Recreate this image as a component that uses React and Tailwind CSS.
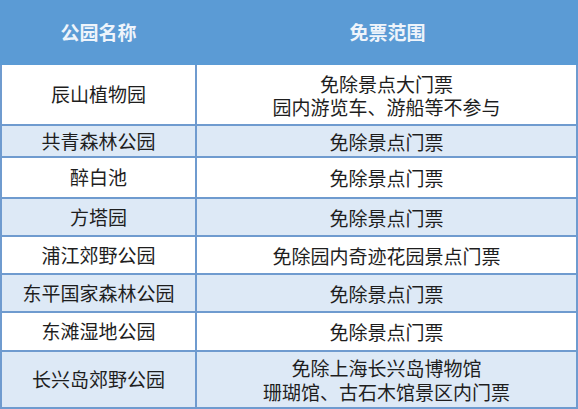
import React from 'react';

const rows = [
  { name: '辰山植物园', scope: ['免除景点大门票', '园内游览车、游船等不参与'], h: 'h-[61px]', bg: 'bg-white', lh: 'leading-[23px]' },
  { name: '共青森林公园', scope: ['免除景点门票'], h: 'h-[32px]', bg: 'bg-[#dde9f6]', lh: 'leading-[23px]' },
  { name: '醉白池', scope: ['免除景点门票'], h: 'h-[41px]', bg: 'bg-white', lh: 'leading-[23px]' },
  { name: '方塔园', scope: ['免除景点门票'], h: 'h-[38px]', bg: 'bg-[#dde9f6]', lh: 'leading-[23px]' },
  { name: '浦江郊野公园', scope: ['免除园内奇迹花园景点门票'], h: 'h-[38px]', bg: 'bg-white', lh: 'leading-[23px]' },
  { name: '东平国家森林公园', scope: ['免除景点门票'], h: 'h-[38px]', bg: 'bg-[#dde9f6]', lh: 'leading-[23px]' },
  { name: '东滩湿地公园', scope: ['免除景点门票'], h: 'h-[39px]', bg: 'bg-white', lh: 'leading-[23px]' },
  { name: '长兴岛郊野公园', scope: ['免除上海长兴岛博物馆', '珊瑚馆、古石木馆景区内门票'], h: 'h-[57px]', bg: 'bg-[#dde9f6]', lh: 'leading-[24px]' },
];

export default function App() {
  return (
    <div
      className="w-[578px] h-[409px] bg-white text-[19px] text-[#1e1e1e] overflow-hidden"
      style={{ fontFamily: '"Noto Sans CJK SC", "Noto Sans", sans-serif' }}
    >
      {/* Header */}
      <div className="flex h-[65px] bg-[#5b9bd5] text-[#eef4fb] font-bold">
        <div className="w-[197px] flex items-center justify-center">公园名称</div>
        <div className="flex-1 flex items-center justify-center">免票范围</div>
      </div>

      {/* Body */}
      <div className="border-x-2 border-[#6f9bcf]">
        {rows.map((r) => (
          <div key={r.name} className={`flex border-b-2 border-[#6f9bcf] ${r.h} ${r.bg}`}>
            <div className="w-[195px] border-r-2 border-[#6f9bcf] flex items-center justify-center">
              {r.name}
            </div>
            <div className="flex-1 flex items-center justify-center">
              <p className={`text-center ${r.lh}`}>
                {r.scope.map((s, i) => (
                  <React.Fragment key={s}>
                    {i > 0 && <br />}
                    {s}
                  </React.Fragment>
                ))}
              </p>
            </div>
          </div>
        ))}
      </div>
    </div>
  );
}
